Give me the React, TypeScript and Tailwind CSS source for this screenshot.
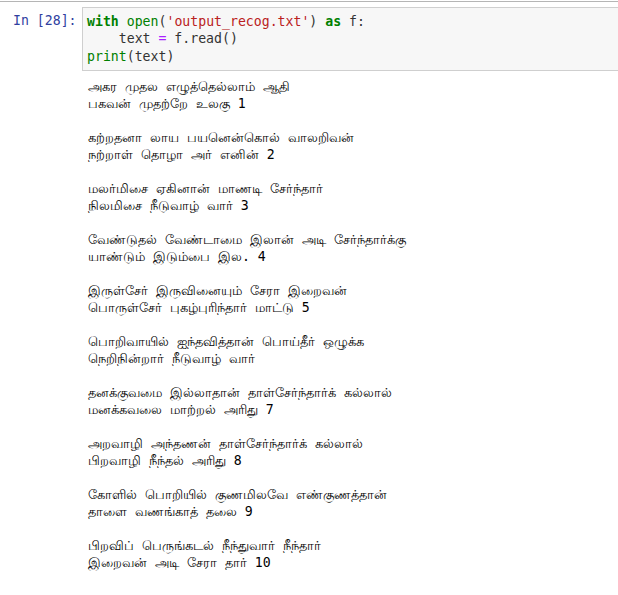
import React from 'react';

const poems: string[][] = [
  ['அகர முதல எழுத்தெல்லாம் ஆதி', 'பகவன் முதற்றே உலகு 1'],
  ['கற்றதனா லாய பயனென்கொல் வாலறிவன்', 'நற்றாள் தொழா அர் எனின் 2'],
  ['மலர்மிசை ஏகினான் மாணடி சேர்ந்தார்', 'நிலமிசை நீடுவாழ் வார் 3'],
  ['வேண்டுதல் வேண்டாமை இலான் அடி சேர்ந்தார்க்கு', 'யாண்டும் இடும்பை இல. 4'],
  ['இருள்சேர் இருவினையும் சேரா இறைவன்', 'பொருள்சேர் புகழ்புரிந்தார் மாட்டு 5'],
  ['பொறிவாயில் ஐந்தவித்தான் பொய்தீர் ஒழுக்க', 'நெறிநின்றார் நீடுவாழ் வார்'],
  ['தனக்குவமை இல்லாதான் தாள்சேர்ந்தார்க் கல்லால்', 'மனக்கவலை மாற்றல் அரிது 7'],
  ['அறவாழி அந்தணன் தாள்சேர்ந்தார்க் கல்லால்', 'பிறவாழி நீந்தல் அரிது 8'],
  ['கோளில் பொறியில் குணமிலவே எண்குணத்தான்', 'தாளை வணங்காத் தலை 9'],
  ['பிறவிப் பெருங்கடல் நீந்துவார் நீந்தார்', 'இறைவன் அடி சேரா தார் 10'],
];

const mono = "font-['DejaVu_Sans_Mono','Liberation_Mono',monospace]";

export default function App() {
  return (
    <div className={`w-[618px] h-[595px] overflow-hidden bg-white ${mono} text-[13.2px]`}>
      <div className="mt-px h-px bg-[#b5b5b5]" />

      {/* Input cell */}
      <div className="flex mt-[5px]">
        <div className="w-[82px] shrink-0 pl-[13px] pt-[5px] leading-[17.5px] text-[#303f9f] whitespace-pre">
          In [28]:
        </div>
        <div className="w-[560px] shrink-0 border border-[#cfcfcf] bg-[#f7f7f7] pl-[4px] py-[4.5px] leading-[17.5px] text-[#333] whitespace-pre">
          <div>
            <span className="font-bold text-[#008000]">with</span>{' '}
            <span className="text-[#008000]">open</span>(
            <span className="text-[#ba2121]">'output_recog.txt'</span>){' '}
            <span className="font-bold text-[#008000]">as</span> f:
          </div>
          <div>
            {'    '}text <span className="text-[#aa22ff]">=</span> f.read()
          </div>
          <div>
            <span className="text-[#008000]">print</span>(text)
          </div>
        </div>
      </div>

      {/* Output */}
      <div className="pl-[88px] pt-[7px] leading-[17px] text-black whitespace-pre">
        {poems.map((p, i) => (
          <div key={i} className="mb-[17px]">
            <div>{p[0]}</div>
            <div>{p[1]}</div>
          </div>
        ))}
      </div>
    </div>
  );
}
